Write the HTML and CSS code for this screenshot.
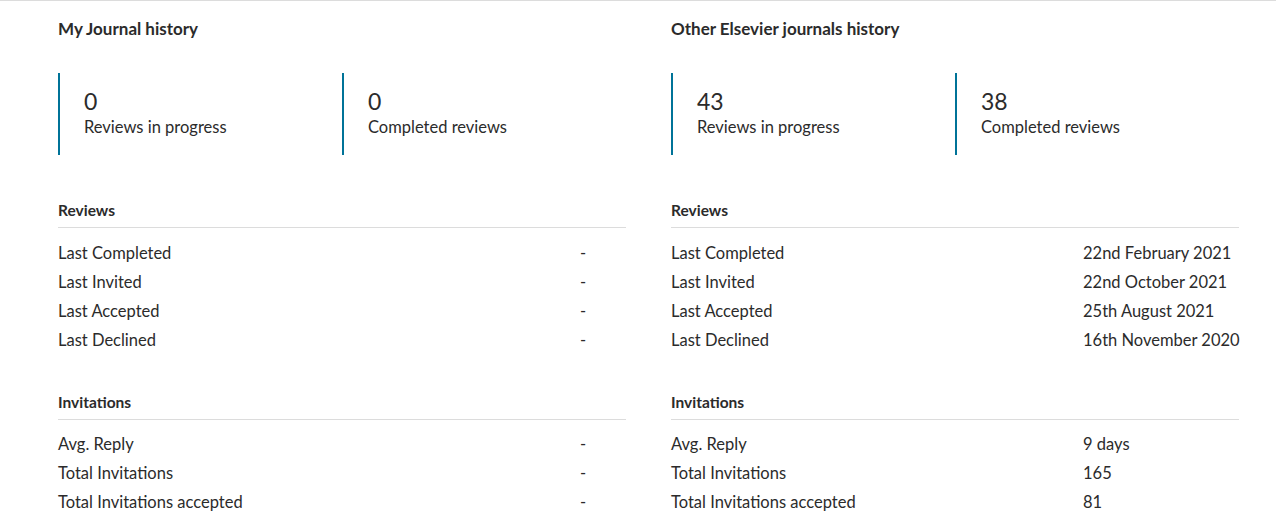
FILE: index.html
```html
<!DOCTYPE html>
<html>
	<head>
		<meta charset="utf-8" />
		<title>Reviewer history</title>
		<link rel="stylesheet" href="styles.css">
	</head>

	<body>
		<div class="history">
			<div class="col mine">
				<h2 class="title">My Journal history</h2>
				<div class="stats">
					<div class="stat">
						<div class="num">0</div>
						<div class="label">Reviews in progress</div>
					</div>
					<div class="stat">
						<div class="num">0</div>
						<div class="label">Completed reviews</div>
					</div>
				</div>

				<h3 class="head">Reviews</h3>
				<dl class="rows">
					<dt>Last Completed</dt><dd>-</dd>
					<dt>Last Invited</dt><dd>-</dd>
					<dt>Last Accepted</dt><dd>-</dd>
					<dt>Last Declined</dt><dd>-</dd>
				</dl>

				<h3 class="head head-inv">Invitations</h3>
				<dl class="rows rows-inv">
					<dt>Avg. Reply</dt><dd>-</dd>
					<dt>Total Invitations</dt><dd>-</dd>
					<dt>Total Invitations accepted</dt><dd>-</dd>
				</dl>
			</div>

			<div class="col other">
				<h2 class="title">Other Elsevier journals history</h2>
				<div class="stats">
					<div class="stat">
						<div class="num">43</div>
						<div class="label">Reviews in progress</div>
					</div>
					<div class="stat">
						<div class="num">38</div>
						<div class="label">Completed reviews</div>
					</div>
				</div>

				<h3 class="head">Reviews</h3>
				<dl class="rows">
					<dt>Last Completed</dt><dd>22nd February 2021</dd>
					<dt>Last Invited</dt><dd>22nd October 2021</dd>
					<dt>Last Accepted</dt><dd>25th August 2021</dd>
					<dt>Last Declined</dt><dd>16th November 2020</dd>
				</dl>

				<h3 class="head head-inv">Invitations</h3>
				<dl class="rows rows-inv">
					<dt>Avg. Reply</dt><dd>9 days</dd>
					<dt>Total Invitations</dt><dd>165</dd>
					<dt>Total Invitations accepted</dt><dd>81</dd>
				</dl>
			</div>
		</div>
	</body>

</html>
```

FILE: styles.css
```css
body,
h2,
h3,
dl,
dd {
	margin: 0;
	padding: 0;
}

body {
	font-family: Lato, "Open Sans", sans-serif;
	color: #2b2b2b;
	background: #fff;
}

.history {
	display: grid;
	grid-template-columns: 568px 568px;
	column-gap: 45px;
	padding-left: 58px;
	border-top: 1px solid #dcdcdc;
}

.title {
	margin-top: 18px;
	font-size: 17px;
	line-height: 20px;
	font-weight: bold;
}

.stats {
	display: flex;
	margin-top: 34px;
}

.stat {
	width: 284px;
	box-sizing: border-box;
	padding: 15px 24px 16px 24px;
	border-left: 2px solid #007398;
}

.num {
	font-size: 23px;
	line-height: 27px;
}

.label {
	font-size: 16.5px;
	line-height: 24px;
	white-space: nowrap;
}

.head {
	margin-top: 45px;
	padding-bottom: 7px;
	border-bottom: 1px solid #dcdcdc;
	font-size: 15.5px;
	line-height: 20px;
	font-weight: bold;
}

.head-inv {
	margin-top: 37px;
	padding-bottom: 7px;
}

.rows {
	display: grid;
	margin-top: 11px;
	font-size: 16.5px;
	line-height: 29px;
	white-space: nowrap;
}

.rows-inv {
	margin-top: 10px;
}

.mine .rows {
	grid-template-columns: 522px 1fr;
}

.other .rows {
	grid-template-columns: 412px 1fr;
}
```
